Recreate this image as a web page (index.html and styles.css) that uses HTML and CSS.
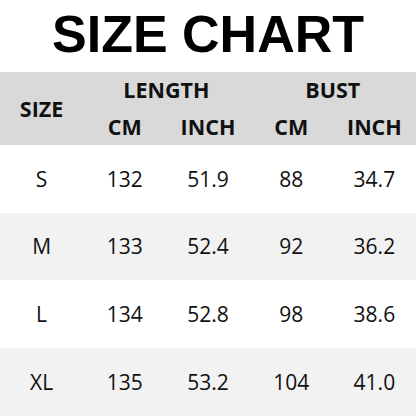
FILE: index.html
```html
<!DOCTYPE html>
<html>
<head>
<meta charset="utf-8">
<link rel="stylesheet" href="styles.css">
</head>
<body>
<div class="page">
  <h1 class="title">SIZE CHART</h1>
  <div class="head">
    <div class="hcell size">SIZE</div>
    <div class="hcell group">LENGTH</div>
    <div class="hcell group">BUST</div>
    <div class="hcell">CM</div>
    <div class="hcell">INCH</div>
    <div class="hcell">CM</div>
    <div class="hcell">INCH</div>
  </div>
  <div class="row"><div>S</div><div>132</div><div>51.9</div><div>88</div><div>34.7</div></div>
  <div class="row alt"><div>M</div><div>133</div><div>52.4</div><div>92</div><div>36.2</div></div>
  <div class="row"><div>L</div><div>134</div><div>52.8</div><div>98</div><div>38.6</div></div>
  <div class="row alt"><div>XL</div><div>135</div><div>53.2</div><div>104</div><div>41.0</div></div>
</div>
</body>
</html>
```
FILE: styles.css
```css
html, body { margin: 0; padding: 0; background: #fff; }
.page { width: 416px; height: 416px; display: flex; flex-direction: column; color: #111; }
.title {
  margin: 0; height: 72px; display: flex; align-items: center; justify-content: center;
  font-family: "Liberation Sans", Arial, sans-serif; font-weight: 700; font-size: 52px;
  color: #000; padding-bottom: 4px; box-sizing: border-box;
}
.head {
  height: 73px; background: #d9d9d9;
  display: grid; grid-template-columns: repeat(5, 1fr); grid-template-rows: 36px 37px;
  font-family: "Open Sans", sans-serif; font-weight: 700; font-size: 21.5px; color: #111;
}
.hcell { display: flex; align-items: center; justify-content: center; }
.size { grid-row: 1 / span 2; }
.group { grid-column: span 2; }
.row {
  height: 68px; display: grid; grid-template-columns: repeat(5, 1fr);
  font-family: "Open Sans", sans-serif; font-size: 21px; color: #111;
}
.row div { display: flex; align-items: center; justify-content: center; }
.alt { background: #f2f2f2; }
```
